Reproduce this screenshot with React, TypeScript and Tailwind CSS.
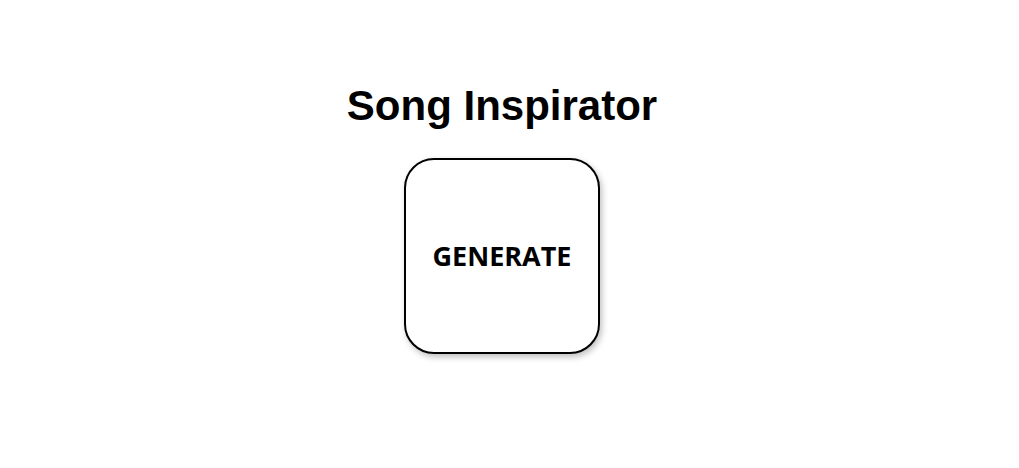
export default function App() {
  return (
    <div className="min-h-screen bg-white pr-[15px] flex flex-col items-center">
      <h1 className="mt-[82px] text-[42px] font-bold leading-[48px] text-black font-['Liberation_Sans',Arial,sans-serif]">
        Song Inspirator
      </h1>
      <button className="mt-[28px] w-[196px] h-[196px] rounded-[30px] border-2 border-black bg-white shadow-[2px_3px_6px_rgba(0,0,0,0.25)] flex items-center justify-center">
        <span className="text-[27px] font-bold text-black font-['Open_Sans',sans-serif]">GENERATE</span>
      </button>
    </div>
  )
}
